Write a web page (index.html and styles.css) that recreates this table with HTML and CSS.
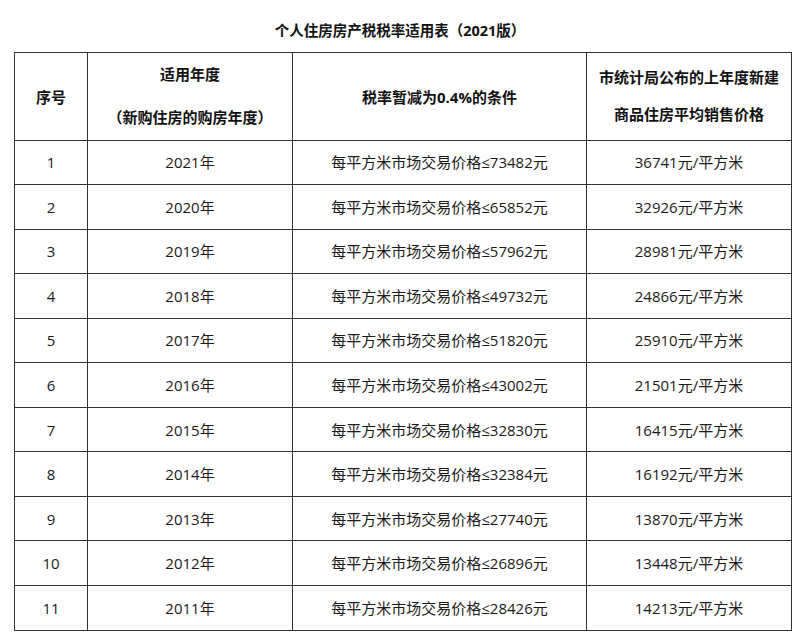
FILE: index.html
```html
<!DOCTYPE html>
<html lang="zh-CN">
<head>
<meta charset="utf-8">
<title>个人住房房产税税率适用表（2021版）</title>
<link rel="stylesheet" href="styles.css">
</head>
<body>
<h1 class="title">个人住房房产税税率适用表（2021版）</h1>
<table class="rates">
  <colgroup>
    <col class="c-no">
    <col class="c-year">
    <col class="c-cond">
    <col class="c-price">
  </colgroup>
  <thead>
    <tr>
      <th>序号</th>
      <th class="two-lines"><span>适用年度</span><span>（新购住房的购房年度）</span></th>
      <th>税率暂减为0.4%的条件</th>
      <th class="two-lines tight"><span>市统计局公布的上年度新建</span><span>商品住房平均销售价格</span></th>
    </tr>
  </thead>
  <tbody>
    <tr><td>1</td><td>2021年</td><td>每平方米市场交易价格≤73482元</td><td>36741元/平方米</td></tr>
    <tr><td>2</td><td>2020年</td><td>每平方米市场交易价格≤65852元</td><td>32926元/平方米</td></tr>
    <tr><td>3</td><td>2019年</td><td>每平方米市场交易价格≤57962元</td><td>28981元/平方米</td></tr>
    <tr><td>4</td><td>2018年</td><td>每平方米市场交易价格≤49732元</td><td>24866元/平方米</td></tr>
    <tr><td>5</td><td>2017年</td><td>每平方米市场交易价格≤51820元</td><td>25910元/平方米</td></tr>
    <tr><td>6</td><td>2016年</td><td>每平方米市场交易价格≤43002元</td><td>21501元/平方米</td></tr>
    <tr><td>7</td><td>2015年</td><td>每平方米市场交易价格≤32830元</td><td>16415元/平方米</td></tr>
    <tr><td>8</td><td>2014年</td><td>每平方米市场交易价格≤32384元</td><td>16192元/平方米</td></tr>
    <tr><td>9</td><td>2013年</td><td>每平方米市场交易价格≤27740元</td><td>13870元/平方米</td></tr>
    <tr><td>10</td><td>2012年</td><td>每平方米市场交易价格≤26896元</td><td>13448元/平方米</td></tr>
    <tr><td>11</td><td>2011年</td><td>每平方米市场交易价格≤28426元</td><td>14213元/平方米</td></tr>
  </tbody>
</table>
</body>
</html>
```
FILE: styles.css
```css
html, body {
  margin: 0;
  padding: 0;
  background: #ffffff;
}
body {
  font-family: "Open Sans", "Noto Sans CJK SC", sans-serif;
  color: #1a1a1a;
  width: 800px;
}
.title {
  margin: 0;
  padding: 21px 0 11px 0;
  height: 20px;
  line-height: 20px;
  font-size: 14.5px;
  font-weight: bold;
  color: #111111;
  text-align: center;
  box-sizing: content-box;
}
.rates {
  margin-left: 14px;
  border-collapse: collapse;
  table-layout: fixed;
  width: 777px;
  font-size: 15px;
}
.c-no { width: 73px; }
.c-year { width: 205px; }
.c-cond { width: 294px; }
.c-price { width: 205px; }
.rates th,
.rates td {
  border: 1.5px solid #333333;
  padding: 0;
  text-align: center;
  vertical-align: middle;
}
.rates th {
  height: 86.5px;
  font-weight: bold;
  color: #111111;
  font-size: 15px;
}
.rates td {
  height: 43.55px;
  line-height: 20px;
}
.two-lines span {
  display: block;
  line-height: 43px;
}
.two-lines.tight span {
  line-height: 37px;
}
```
